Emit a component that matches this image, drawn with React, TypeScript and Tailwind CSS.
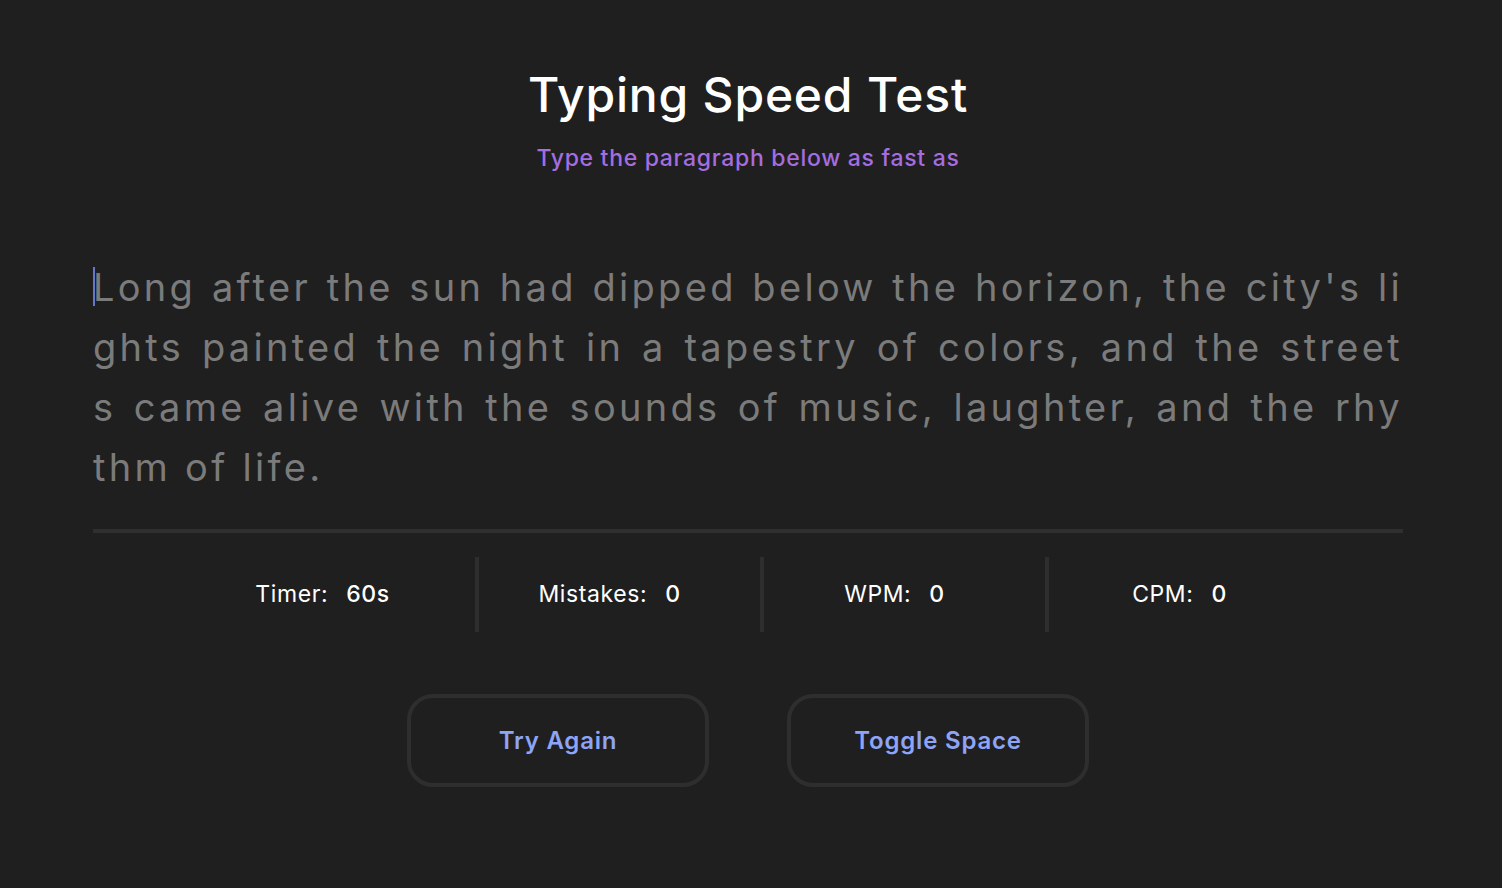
import React from "react";

// paragraph as it wraps in the reference (break-all, justified)
const lines = [
  "Long after the sun had dipped below the horizon, the city's li",
  "ghts painted the night in a tapestry of colors, and the street",
  "s came alive with the sounds of music, laughter, and the rhy",
  "thm of life.",
];

const stats = [
  { label: "Timer:", value: "60s" },
  { label: "Mistakes:", value: "0" },
  { label: "WPM:", value: "0" },
  { label: "CPM:", value: "0" },
];

export default function App() {
  return (
    <div className="min-h-[888px] w-full bg-[#1f1f1f] font-['Inter','Liberation_Sans',sans-serif]">
      <div className="ml-[93px] w-[1310px] pt-[67px]">
        <h1 className="text-center text-[48px] leading-[56px] font-medium tracking-[0.8px] text-white">
          Typing Speed Test
        </h1>
        <p className="mt-[19px] text-center text-[23px] leading-[32px] font-medium tracking-[0.7px] text-[#a46de0]">
          Type the paragraph below as fast as
        </p>

        {/* paragraph to type */}
        <div className="relative mt-[83px] text-[38px] leading-[60px] tracking-[3.3px] text-[#7b7b7b]">
          <span className="absolute left-0 top-[10px] h-[39px] w-[2px] bg-[#6676c8]" />
          {lines.map((l, i) => (
            <div
              key={i}
              className={
                i < lines.length - 1
                  ? "whitespace-nowrap text-justify [text-align-last:justify]"
                  : "whitespace-nowrap"
              }
            >
              {l}
            </div>
          ))}
        </div>

        <div className="mt-[32px] h-[4px] w-full bg-[#2f2f2f]" />

        {/* stats */}
        <div className="mt-[24px] ml-[97px] grid w-[1140px] grid-cols-4">
          {stats.map((s, i) => (
            <div
              key={s.label}
              className={
                "flex h-[75px] items-center justify-center gap-[18px] pr-[20px] text-[23px] tracking-[0.6px] text-white " +
                (i > 0 ? "border-l-[4px] border-[#2e2e2e]" : "")
              }
            >
              <span>{s.label}</span>
              <span className="font-medium">{s.value}</span>
            </div>
          ))}
        </div>

        {/* actions */}
        <div className="mt-[62px] flex justify-center gap-[78px]">
          <button className="h-[93px] w-[302px] rounded-[26px] border-[4px] border-[#2e2e2e] text-[24px] font-semibold tracking-[0.8px] text-[#8ea4f6]">
            Try Again
          </button>
          <button className="h-[93px] w-[302px] rounded-[26px] border-[4px] border-[#2e2e2e] text-[24px] font-semibold tracking-[0.8px] text-[#8ea4f6]">
            Toggle Space
          </button>
        </div>
      </div>
    </div>
  );
}
